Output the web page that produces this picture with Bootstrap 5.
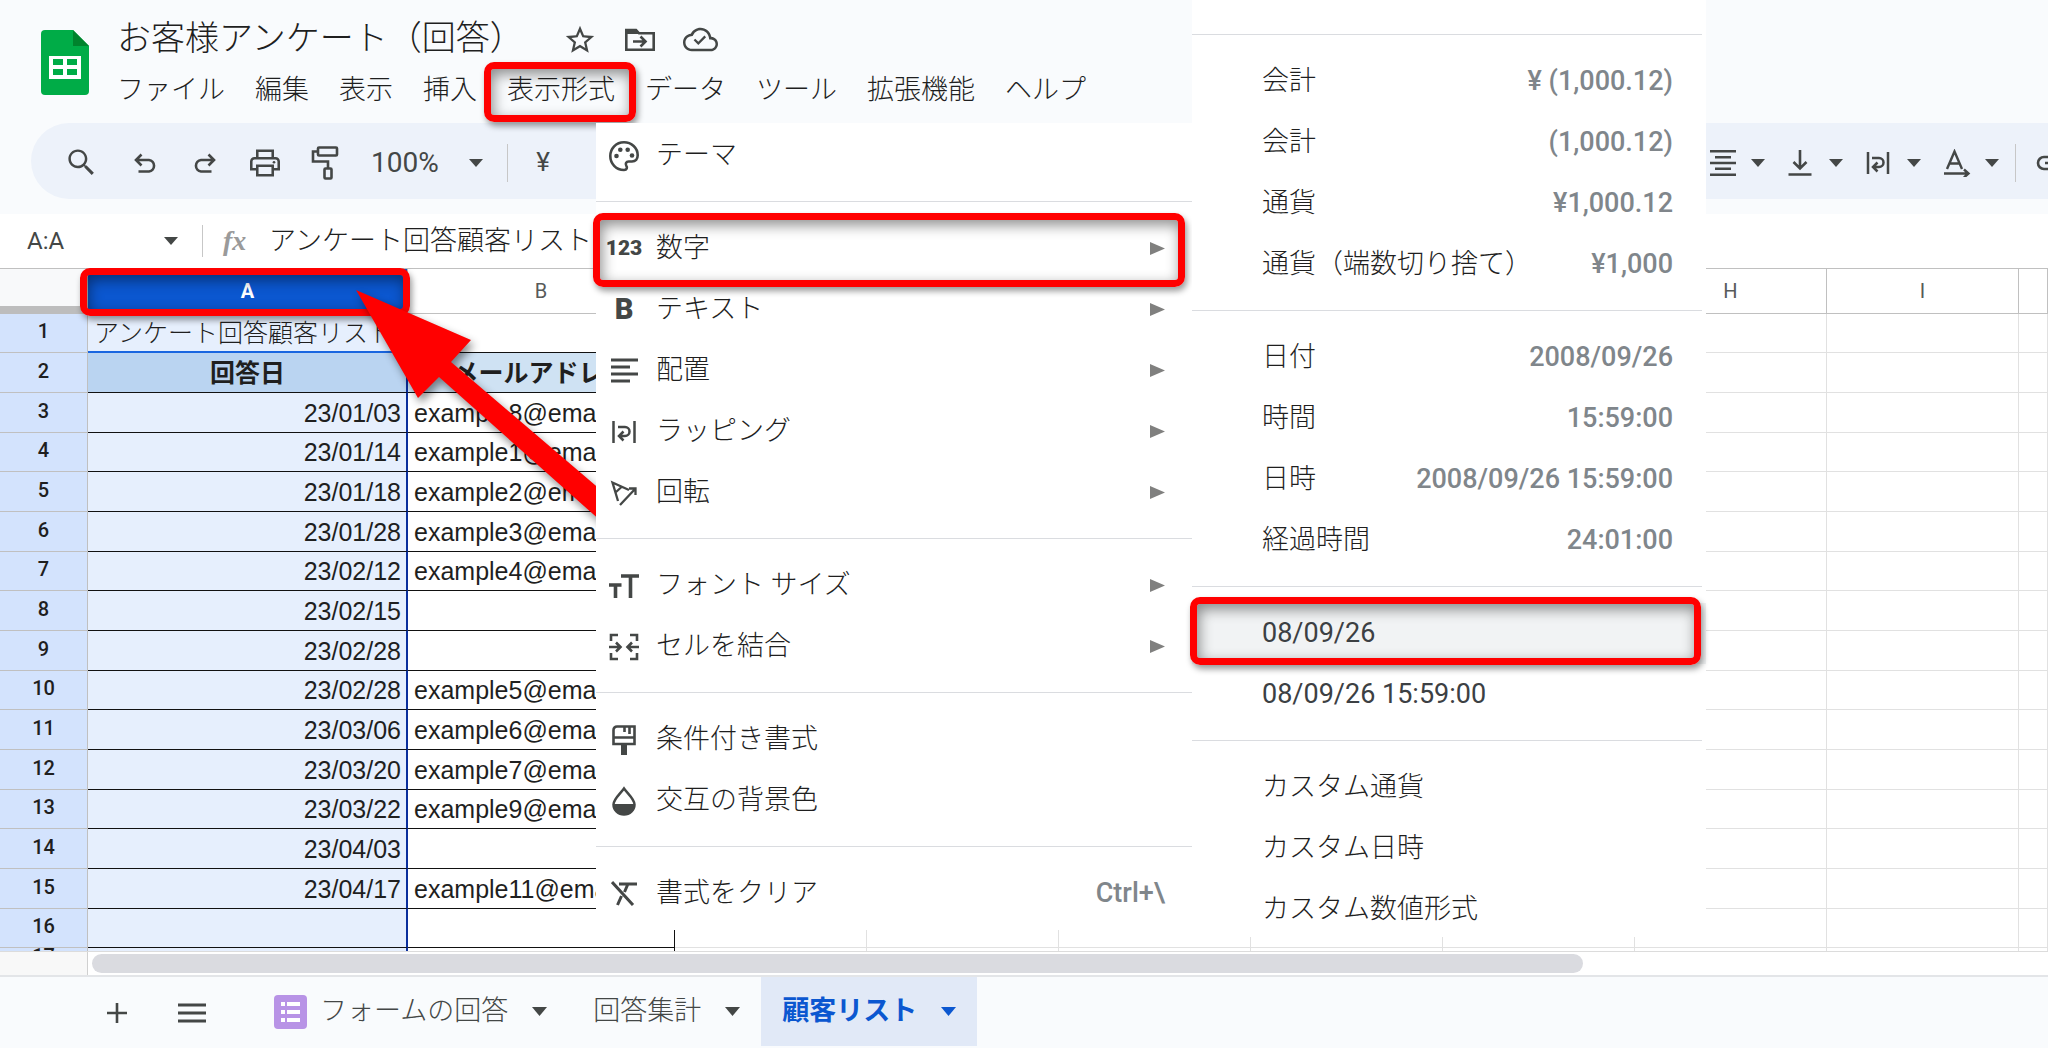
<!DOCTYPE html>
<html lang="ja">
<head>
<meta charset="utf-8">
<meta name="viewport" content="width=device-width, initial-scale=1">
<title>お客様アンケート（回答）</title>
<link href="https://cdn.jsdelivr.net/npm/bootstrap@5.3.0/dist/css/bootstrap.min.css" rel="stylesheet">
<script src="https://cdn.jsdelivr.net/npm/bootstrap@5.3.0/dist/js/bootstrap.bundle.min.js"></script>
<style>
  body { font-family: Roboto, "Noto Sans CJK JP", sans-serif; font-weight: 300; color: #1f1f1f; background: #fff; }
  .app { height: 100vh; overflow: hidden; }
  .app svg { display: block; flex: none; fill: currentColor; }
  .app svg.line { fill: none; stroke: currentColor; }
  .app button { border: 0; background: none; color: #444746; padding: 0; font: inherit; }
  .app a { color: inherit; text-decoration: none; }

  /* header */
  .head { background: #f9fbfd; height: 214px; }
  .brand { padding: 30px 28px 0 41px; }
  .doc-title { font-size: 34px; line-height: 48px; margin: 0; font-weight: 300; }
  .title-row { height: 65px; padding-top: 14px; }
  .title-icons { gap: 26px; margin-left: 39px; color: #444746; }
  .menus { gap: 30px; font-size: 27px; line-height: 50px; }
  .tools { height: 76px; margin-left: 31px; padding: 3px 0 0 20px; background: #edf2fa; border-radius: 38px 0 0 38px; color: #444746; }
  .tool { width: 60px; display: flex; justify-content: center; }
  .zoom-select { border: 0; width: 112px; font-size: 28px; color: #444746; appearance: none; padding: 0;
    background: url("data:image/svg+xml,%3Csvg xmlns='http://www.w3.org/2000/svg' viewBox='0 0 14 8'%3E%3Cpath fill='%23444746' d='M0 0h14L7 8z'/%3E%3C/svg%3E") no-repeat right center / 14px 8px; }
  .vline { width: 1px; height: 38px; background: #c7c7c7; flex: none; }
  .app .yen { width: 70px; font-size: 26px; font-weight: 400; }
  .drops { gap: 22px; }
  .cut { width: 12px; overflow: hidden; }

  /* formula bar */
  .fx-bar { height: 54px; }
  .name-box { width: 164px; border: 0; padding: 0 0 0 27px; font: 400 24px Roboto, sans-serif; color: #444746; }
  .fx-bar .vline { height: 32px; margin: 0 20px 0 24px; }
  .fx-mark { font: italic 700 28px "Liberation Serif", serif; color: #9a9a9a; width: 46px; }
  .fx-input { border: 0; padding: 0; width: 500px; font: inherit; font-size: 27px; color: #1f1f1f; }

  /* sheet */
  .sheet-wrap { flex: 1 1 0; min-height: 0; overflow: hidden; }
  .sheet { table-layout: fixed; width: 100%; border-collapse: separate; border-spacing: 0; }
  .sheet th, .sheet td { border: 0 solid #e1e1e1; border-width: 0 1px 1px 0; padding: 0 6px; white-space: nowrap; overflow: hidden; vertical-align: middle; }
  .sheet thead th { height: 46px; border-color: #c0c0c0; border-top-width: 1px; font-weight: 400; font-size: 20px; text-align: center; color: #575a5a; background: #fff; }
  .sheet thead .corner { background: #f8f9fa; border-bottom: 8px solid #bdbdbd; }
  .sheet thead .picked { background: #0b57d0; color: #fff; font-weight: 700; overflow: visible; position: relative; }
  .sheet tbody tr { height: 40px; line-height: 34px; }
  .sheet tbody tr:nth-child(3n+1) { height: 39px; }
  .sheet tbody th { background: #d3e3fd; border-color: #c0c0c0; font-size: 20px; font-weight: 500; text-align: center; color: #1f1f1f; padding-bottom: 4px; }
  .sheet tbody tr:last-child th { vertical-align: top; line-height: 16px; }
  .sheet tbody td { font-family: "Liberation Sans", "Noto Sans CJK JP", sans-serif; font-size: 25px; }
  .sheet td.ca { background: #e6effd; border-right: 2px solid #0b2f9c; border-bottom-color: #111; text-align: right; padding-right: 5px; }
  .sheet td.cb { border-color: #111; }
  .sheet tr:nth-child(1) td.ca { text-align: left; border-bottom: 2px solid #1a66e0; }
  .sheet tr:nth-child(2) td.ca { background: #bad4f1; text-align: center; font-weight: 700; }
  .sheet tr:nth-child(2) td.cb { background: #cfe2f3; text-align: center; font-weight: 700; }
  .c-num { width: 88px; } .c-a { width: 320px; } .c-b { width: 267px; } .c-x { width: 192px; }

  /* scroll strip and sheet tabs */
  .scroll-strip { height: 26px; border-top: 1px solid #dcdcdc; border-bottom: 2px solid #e3e5e8; background: #fff; }
  .strip-corner { width: 88px; height: 23px; background: #f8f8f8; border-right: 1px solid #d0d0d0; }
  .thumb { width: 1491px; max-width: 73%; height: 19px; border-radius: 10px; background: #dadbe0; margin-left: 4px; }
  .tabs { height: 71px; background: #f9fbfd; font-size: 27px; padding-left: 79px; }
  .tab-tool { width: 75px; display: flex; justify-content: center; }
  .app .tab-item { padding: 0 21px; height: 69px; display: flex; align-items: center; }
  .tab-item .caret { margin-left: 24px; }
  .app .tab-on { background: #e1e9f7; color: #0b57d0; font-weight: 700; }

  /* menus */
  .pop { position: absolute; background: #fff; font-size: 27px; z-index: 5; }
  .pop-format { left: 596px; top: 123px; width: 596px; padding: 2px 0 6px; }
  .pop-number { left: 1192px; top: 0; width: 514px; padding: 19px 0 0; z-index: 6; height: 937px; }
  .pop hr { margin: 15px 0 16px; border: 0; border-top: 1px solid #dadce0; opacity: 1; }
  .pop-number hr { margin-right: 4px; }
  .opt { height: 61px; display: flex; align-items: center; width: 100%; }
  .app .opt { color: #1f1f1f; text-align: left; }
  .pop-format .opt { padding: 0 27px 0 10px; }
  .pop-number .opt { padding: 0 33px 0 70px; }
  .ico { width: 36px; height: 36px; margin-right: 14px; display: flex; align-items: center; justify-content: center; color: #444746; flex: none; }
  .ico-123 { font-size: 21px; font-weight: 900; }
  .ico-b { font-size: 29px; font-weight: 900; }
  .hint { margin-left: auto; color: #80868b; font-weight: 500; font-size: 27px; }
  .num { font-weight: 400; color: #3c4043; }
  .app .call-date { background: #f1f3f4; }

  /* red call-outs */
  .call { position: relative; }
  .call::after { content: ""; position: absolute; border: 7px solid #f00; border-radius: 10px; pointer-events: none; z-index: 3;
    box-shadow: 2px 4px 6px rgba(0,0,0,.4), inset 2px 5px 14px rgba(0,0,0,.45); }
  .call-menu::after { inset: -3px -21px -7px -23px; }
  .picked.call::after { inset: -1px -3px -3px -8px; }
  .call-number::after { inset: -5px 7px -8px -3px; }
  .call-date::after { inset: -6px 5px -1px -2px; }
  .pointer { position: absolute; left: 340px; top: 270px; z-index: 4; filter: drop-shadow(3px 5px 4px rgba(0,0,0,.45)); }
  .app .pointer { color: #f00; }
</style>
</head>
<body>
<div class="app d-flex flex-column position-relative">

  <header class="head">
    <div class="d-flex">
      <div class="brand">
        <svg width="48" height="65" viewBox="0 0 48 65"><path fill="#00ac47" d="M4 0h28l16 16v45a4 4 0 0 1-4 4H4a4 4 0 0 1-4-4V4a4 4 0 0 1 4-4z"/><path fill="#00832d" d="M32 0l16 16H32z"/><path fill="#fff" fill-rule="evenodd" d="M8 26h32v23H8zM12 29v6h10v-6zM26 29v6h10v-6zM12 39v6h10v-6zM26 39v6h10v-6z"/></svg>
      </div>
      <div>
        <div class="title-row d-flex">
          <h1 class="doc-title">お客様アンケート（回答）</h1>
          <div class="title-icons d-flex align-items-center">
            <button type="button" aria-label="スター"><svg width="34" height="34" viewBox="0 0 24 24"><path d="M22 9.24l-7.19-.62L12 2 9.19 8.63 2 9.24l5.46 4.73L5.82 21 12 17.27 18.18 21l-1.63-7.03L22 9.24zM12 15.4l-3.76 2.27 1-4.28-3.32-2.88 4.38-.38L12 6.1l1.71 4.04 4.38.38-3.32 2.88 1 4.28L12 15.4z"/></svg></button>
            <button type="button" aria-label="移動"><svg class="line" width="34" height="34" viewBox="0 0 34 34" stroke-width="2.6"><path d="M3.3 8v18.7h27.4V10.3H16L13 7H3.300z"/><path d="M3 6h10l4 5H3z" fill="currentColor" stroke="none"/><path d="M10 18.500h12M17.500 13.500l5 5-5 5"/></svg></button>
            <button type="button" aria-label="保存済み"><svg width="35" height="35" viewBox="0 0 24 24"><path fill-rule="evenodd" d="M19.350 10.040C18.670 6.590 15.640 4 12 4 9.110 4 6.600 5.640 5.350 8.040 2.340 8.360 0 10.910 0 14c0 3.310 2.690 6 6 6h13c2.760 0 5-2.240 5-5 0-2.640-2.050-4.780-4.650-4.960zM19 18.300H6c-2.370 0-4.300-1.930-4.300-4.300 0-2.200 1.630-4.060 3.860-4.270l1.070-.11.5-.95C8.080 6.840 9.940 5.700 12 5.700c2.760 0 5.180 2.010 5.690 4.730l.3 1.500 1.230.11c1.700.1 3.080 1.410 3.080 2.960 0 1.820-1.480 3.300-3.300 3.300z"/><path d="M10.500 15.700l-3.200-3.200 1.100-1.100 2.100 2.100 4.200-4.200 1.100 1.100z"/></svg></button>
          </div>
        </div>
        <nav class="menus d-flex" aria-label="メニュー">
          <a href="#">ファイル</a><a href="#">編集</a><a href="#">表示</a><a href="#">挿入</a><a href="#" class="call call-menu">表示形式</a><a href="#">データ</a><a href="#">ツール</a><a href="#">拡張機能</a><a href="#">ヘルプ</a>
        </nav>
      </div>
    </div>
    <div class="tools d-flex align-items-center mt-2">
      <button type="button" class="tool me-1" aria-label="検索"><svg width="35" height="35" viewBox="0 0 24 24"><path d="M15.500 14h-.79l-.28-.27C15.410 12.590 16 11.110 16 9.500 16 5.910 13.090 3 9.500 3S3 5.910 3 9.500 5.910 16 9.500 16c1.610 0 3.090-.59 4.230-1.570l.27.28v.79l5 4.990L20.490 19l-4.990-5zm-6 .3C6.850 14.300 4.700 12.150 4.700 9.500S6.850 4.700 9.500 4.700 14.300 6.850 14.300 9.500 12.150 14.300 9.500 14.300z"/></svg></button>
      <button type="button" class="tool" aria-label="元に戻す"><svg class="line" width="28" height="28" viewBox="0 0 28 28" stroke-width="2.600"><path d="M10.500 5.500l-5.500 5.500 5.500 5.500M5.500 11h12.500a5.800 5.800 0 0 1 0 11.500H7.500"/></svg></button>
      <button type="button" class="tool" aria-label="やり直す"><svg class="line" width="28" height="28" viewBox="0 0 28 28" stroke-width="2.600"><path d="M17.500 5.500l5.500 5.500-5.500 5.500M22.500 11H10a5.800 5.800 0 0 0 0 11.500h10.500"/></svg></button>
      <button type="button" class="tool" aria-label="印刷"><svg width="36" height="36" viewBox="0 0 24 24"><path fill-rule="evenodd" d="M19 8h-1V3H6v5H5c-1.660 0-3 1.340-3 3v6h4v4h12v-4h4v-6c0-1.660-1.340-3-3-3zM7.700 4.700h8.600V8H7.700V4.700zM16.300 19.300H7.700v-4.600h8.600zM18 15.300V13H6v2.300H3.700V11c0-.7.600-1.300 1.300-1.300h14c.7 0 1.300.6 1.300 1.300v4.300z"/><circle cx="18" cy="11.500" r=".9"/></svg></button>
      <button type="button" class="tool" aria-label="書式の貼り付け"><svg class="line" width="30" height="36" viewBox="0 0 30 36" stroke-width="2.600"><rect x="8" y="2.500" width="19" height="8" rx="1"/><path d="M8 6.500H3v10h15v7"/><rect x="14.500" y="23.500" width="7" height="10" rx="1"/></svg></button>
      <select class="zoom-select ms-3" aria-label="ズーム"><option>100%</option></select>
      <span class="vline ms-4"></span>
      <button type="button" class="yen">¥</button>
      <div class="drops d-flex ms-auto align-items-center">
        <button type="button" aria-label="水平方向の配置"><svg class="line" width="56" height="28" viewBox="0 0 56 28" stroke-width="2.600"><path d="M1 2.300h26M6 8.200h16M1 14h26M6 19.800h16M1 25.700h26"/><path d="M42 10h14l-7 8z" fill="currentColor" stroke="none"/></svg></button>
        <button type="button" aria-label="垂直方向の配置"><svg class="line" width="56" height="28" viewBox="0 0 56 28" stroke-width="2.600"><path d="M13 1v18M6.500 13l6.500 6.500 6.500-6.500M1.500 25.500h23"/><path d="M42 10h14l-7 8z" fill="currentColor" stroke="none"/></svg></button>
        <button type="button" aria-label="折り返し"><svg class="line" width="56" height="28" viewBox="0 0 56 28" stroke-width="2.500"><path d="M3 3v22M23 3v22M7 9h7a4.500 4.500 0 0 1 0 9H8M12.500 13.500L8 18l4.500 4.500"/><path d="M42 10h14l-7 8z" fill="currentColor" stroke="none"/></svg></button>
        <button type="button" aria-label="回転"><svg class="line" width="56" height="28" viewBox="0 0 56 28" stroke-width="2.400"><path d="M4 20L11.500 2.500 19 20M6.500 14.500h10M1 24.500h24M21 20.500l4.500 4-4.500 4"/><path d="M42 10h14l-7 8z" fill="currentColor" stroke="none"/></svg></button>
      </div>
      <span class="vline mx-3"></span>
      <button type="button" class="cut ms-1" aria-label="リンクを挿入"><svg class="line" width="30" height="24" viewBox="0 0 30 24" stroke-width="2.600"><path d="M13 6H8a6 6 0 0 0 0 12h5M17 6h5a6 6 0 0 1 0 12h-5M9 12h12"/></svg></button>
    </div>
  </header>

  <div class="fx-bar d-flex align-items-center">
    <input class="name-box" aria-label="名前ボックス" value="A:A">
    <svg width="14" height="8" viewBox="0 0 14 8"><path fill="#444746" d="M0 0h14L7 8z"/></svg>
    <span class="vline"></span>
    <label class="fx-mark" for="formula">fx</label>
    <input id="formula" class="fx-input" value="アンケート回答顧客リスト">
  </div>

  <div class="sheet-wrap">
    <table class="sheet">
      <colgroup><col class="c-num"><col class="c-a"><col class="c-b"><col class="c-x" span="7"><col></colgroup>
      <thead><tr><th class="corner"></th><th class="picked call">A</th><th>B</th><th>C</th><th>D</th><th>E</th><th>F</th><th>G</th><th>H</th><th>I</th><th></th></tr></thead>
      <tbody id="rows"></tbody>
    </table>
  </div>

  <div class="scroll-strip d-flex align-items-center">
    <div class="strip-corner"></div>
    <div class="thumb"></div>
  </div>

  <nav class="tabs d-flex" aria-label="シート">
    <button type="button" class="tab-tool align-items-center" aria-label="シートを追加"><svg class="line" width="22" height="22" viewBox="0 0 22 22" stroke-width="2.600"><path d="M11 1v20M1 11h20"/></svg></button>
    <button type="button" class="tab-tool align-items-center" aria-label="すべてのシート"><svg class="line" width="28" height="20" viewBox="0 0 28 20" stroke-width="2.800"><path d="M0 2h28M0 10h28M0 18h28"/></svg></button>
    <button type="button" class="tab-item ms-4 me-1">
      <svg class="me-2" width="38" height="34" viewBox="0 0 38 34"><rect width="33" height="34" rx="4" fill="#b893e6"/><path fill="#fff" d="M7 7h4v4H7zM13 7h13v4H13zM7 15h4v4H7zM13 15h13v4H13zM7 23h4v4H7zM13 23h13v4H13z"/></svg>
      フォームの回答
      <svg class="caret" width="15" height="9" viewBox="0 0 15 9"><path d="M0 0h15L7.500 9z"/></svg>
    </button>
    <button type="button" class="tab-item">回答集計<svg class="caret" width="15" height="9" viewBox="0 0 15 9"><path d="M0 0h15L7.500 9z"/></svg></button>
    <button type="button" class="tab-item tab-on">顧客リスト<svg class="caret" width="15" height="9" viewBox="0 0 15 9"><path d="M0 0h15L7.500 9z"/></svg></button>
  </nav>

  <svg class="pointer" width="300" height="280" viewBox="0 0 300 280"><path d="M16 20L131 70L111 92L262 221V252L99 107L78 128z"/></svg>

  <div class="pop pop-format" role="menu">
    <button type="button" class="opt"><span class="ico"><svg class="line" width="32" height="32" viewBox="0 0 32 32" stroke-width="2.600"><path d="M16 2.300C8 2.300 2.300 8.500 2.300 16S8 30 16 30c3 0 3.500-2.500 2.300-4.200-1.300-2 0-4.300 2.200-4.300H24c3.500 0 5.700-2.500 5.700-6.200C29.700 8 23.500 2.300 16 2.300z"/><g fill="currentColor" stroke="none"><circle cx="8.500" cy="16" r="2.300"/><circle cx="12.300" cy="9.800" r="2.300"/><circle cx="19.700" cy="9.800" r="2.300"/><circle cx="24" cy="15.500" r="2.300"/></g></svg></span>テーマ</button>
    <hr>
    <button type="button" class="opt call call-number"><span class="ico ico-123">123</span>数字<svg class="ms-auto" width="15" height="13" viewBox="0 0 15 13"><path fill="#80807f" d="M0 0l15 6.500L0 13z"/></svg></button>
    <button type="button" class="opt"><span class="ico ico-b">B</span>テキスト<svg class="ms-auto" width="15" height="13" viewBox="0 0 15 13"><path fill="#80807f" d="M0 0l15 6.500L0 13z"/></svg></button>
    <button type="button" class="opt"><span class="ico"><svg class="line" width="27" height="25" viewBox="0 0 27 25" stroke-width="2.800"><path d="M0 2h27M0 9h19M0 16h27M0 23h19"/></svg></span>配置<svg class="ms-auto" width="15" height="13" viewBox="0 0 15 13"><path fill="#80807f" d="M0 0l15 6.500L0 13z"/></svg></button>
    <button type="button" class="opt"><span class="ico"><svg class="line" width="26" height="26" viewBox="0 0 26 26" stroke-width="2.500"><path d="M2.500 2v22M23.500 2v22M7 8h7a4.500 4.500 0 0 1 0 9H8M12.500 12.500L8 17l4.500 4.500"/></svg></span>ラッピング<svg class="ms-auto" width="15" height="13" viewBox="0 0 15 13"><path fill="#80807f" d="M0 0l15 6.500L0 13z"/></svg></button>
    <button type="button" class="opt"><span class="ico"><svg class="line" width="28" height="28" viewBox="0 0 28 28" stroke-width="2.300"><path d="M8 22L2.500 3.500 19 11M5.500 13.500l6.500-6M10 26L25.500 9.500M19 9.500h6.500V16"/></svg></span>回転<svg class="ms-auto" width="15" height="13" viewBox="0 0 15 13"><path fill="#80807f" d="M0 0l15 6.500L0 13z"/></svg></button>
    <hr>
    <button type="button" class="opt"><span class="ico"><svg class="line" width="30" height="24" viewBox="0 0 30 24" stroke-width="3.600"><path d="M12 2h18M21.500 2v22M0 11h12.500M6.500 11v13"/></svg></span>フォント サイズ<svg class="ms-auto" width="15" height="13" viewBox="0 0 15 13"><path fill="#80807f" d="M0 0l15 6.500L0 13z"/></svg></button>
    <button type="button" class="opt"><span class="ico"><svg class="line" width="30" height="28" viewBox="0 0 30 28" stroke-width="2.600"><path d="M2 8V2h7M21 2h7v6M2 20v6h7M21 26h7v-6M0 14h10.500M30 14H19.500M7 9.500l4.500 4.500L7 18.500M23 9.500L18.500 14l4.500 4.500"/></svg></span>セルを結合<svg class="ms-auto" width="15" height="13" viewBox="0 0 15 13"><path fill="#80807f" d="M0 0l15 6.500L0 13z"/></svg></button>
    <hr>
    <button type="button" class="opt"><span class="ico"><svg class="line" width="24" height="30" viewBox="0 0 24 30" stroke-width="2.600"><path d="M1.500 19V5a3.500 3.500 0 0 1 3.500-3.500h17.500V19zM1.500 12.500h21M12.500 2v5M17.500 2v7"/><path d="M12 19v11" stroke-width="6"/></svg></span>条件付き書式</button>
    <button type="button" class="opt"><span class="ico"><svg class="line" width="24" height="30" viewBox="0 0 24 30" stroke-width="2.500"><path d="M12 2.500C8 8 1.500 13 1.500 18.500a10.500 10 0 0 0 21 0C22.500 13 16 8 12 2.500z"/><path d="M1.500 18h21a10.500 10.500 0 0 1-21 0z" fill="currentColor" stroke="none"/></svg></span>交互の背景色</button>
    <hr>
    <button type="button" class="opt"><span class="ico"><svg class="line" width="26" height="25" viewBox="0 0 26 25" stroke-width="3"><path d="M1 1l21 23M8 3h18M16.500 4l-3 7M10.500 15L6.500 24"/></svg></span>書式をクリア<span class="hint">Ctrl+\</span></button>
  </div>

  <div class="pop pop-number" role="menu">
    <hr>
    <button type="button" class="opt">会計<span class="hint">¥ (1,000.12)</span></button>
    <button type="button" class="opt">会計<span class="hint">(1,000.12)</span></button>
    <button type="button" class="opt">通貨<span class="hint">¥1,000.12</span></button>
    <button type="button" class="opt">通貨（端数切り捨て）<span class="hint">¥1,000</span></button>
    <hr>
    <button type="button" class="opt">日付<span class="hint">2008/09/26</span></button>
    <button type="button" class="opt">時間<span class="hint">15:59:00</span></button>
    <button type="button" class="opt">日時<span class="hint">2008/09/26 15:59:00</span></button>
    <button type="button" class="opt">経過時間<span class="hint">24:01:00</span></button>
    <hr>
    <button type="button" class="opt call call-date"><span class="num">08/09/26</span></button>
    <button type="button" class="opt"><span class="num">08/09/26 15:59:00</span></button>
    <hr>
    <button type="button" class="opt">カスタム通貨</button>
    <button type="button" class="opt">カスタム日時</button>
    <button type="button" class="opt">カスタム数値形式</button>
  </div>
</div>

<script>
  const data = [
    ['アンケート回答顧客リスト', ''], ['回答日', 'メールアドレス'],
    ['23/01/03', 'example8@email.com'], ['23/01/14', 'example1@email.com'], ['23/01/18', 'example2@email.com'],
    ['23/01/28', 'example3@email.com'], ['23/02/12', 'example4@email.com'], ['23/02/15', ''], ['23/02/28', ''],
    ['23/02/28', 'example5@email.com'], ['23/03/06', 'example6@email.com'], ['23/03/20', 'example7@email.com'],
    ['23/03/22', 'example9@email.com'], ['23/04/03', ''], ['23/04/17', 'example11@email.com'], ['', ''], ['', '']
  ];
  document.getElementById('rows').innerHTML = data.map((r, i) =>
    `<tr><th>${i + 1}</th><td class="ca">${r[0]}</td><td class="cb">${r[1]}</td>${'<td></td>'.repeat(8)}</tr>`).join('');
</script>
</body>
</html>
